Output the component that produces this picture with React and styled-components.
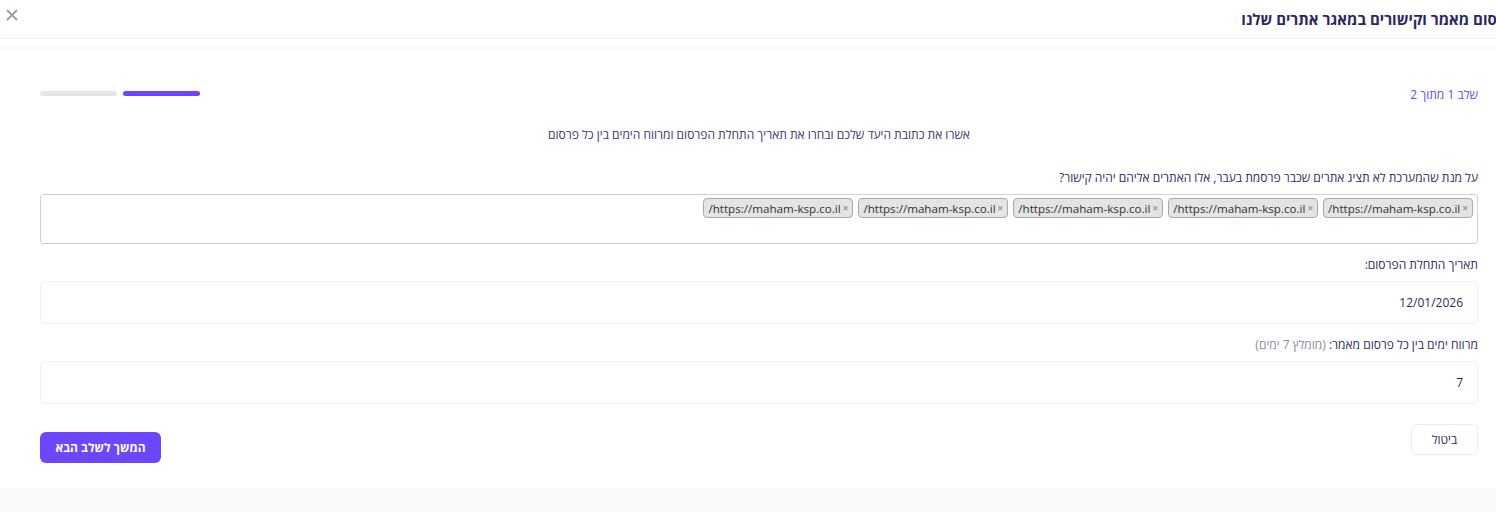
import React from 'react';
import styled, { createGlobalStyle } from 'styled-components';

const GlobalStyle = createGlobalStyle`
  html, body {
    margin: 0;
    padding: 0;
    background: #fafafb;
    overflow: hidden;
  }
  body {
    font-family: "Open Sans", "Noto Sans", "DejaVu Sans", sans-serif;
  }
`;

const Modal = styled.div`
  direction: rtl;
  width: 1496px;
  background: #fff;
  box-sizing: border-box;
  padding-bottom: 26px;
  overflow: hidden;
  box-shadow: 0 2px 6px rgba(40, 40, 80, 0.03);
`;

const Header = styled.div`
  display: flex;
  align-items: center;
  justify-content: space-between;
  height: 38px;
  padding: 0 0 0 6px;
  border-bottom: 1px solid #efeff5;
  overflow: hidden;
`;

const Title = styled.h2`
  margin: 0 -18px 0 0;
  font-size: 15px;
  font-weight: 700;
  color: #2b2862;
  white-space: nowrap;
`;

const CloseButton = styled.button`
  border: 0;
  background: none;
  padding: 0;
  width: 12px;
  height: 12px;
  margin-top: -8px;
  cursor: pointer;
  display: flex;
`;

const Divider = styled.div`
  height: 11px;
  background: linear-gradient(to bottom, #fff 0, #fff 7px, #fafafc 8px, #fafafc 11px);
`;

const Body = styled.div`
  padding: 36px 18px 0 40px;
`;

const StepRow = styled.div`
  display: flex;
  align-items: center;
  justify-content: space-between;
  height: 16px;
`;

const StepText = styled.span`
  font-size: 12px;
  color: #6c47ff;
  margin-top: 1px;
`;

const Bars = styled.div`
  display: flex;
  gap: 6px;
  margin-top: -1px;
`;

const Bar = styled.span`
  width: 77px;
  height: 5px;
  border-radius: 3px;
  background: ${p => (p.$active ? '#6c47ff' : '#e6e6ea')};
`;

const Description = styled.p`
  margin: 25px 0 27px;
  text-align: center;
  font-size: 12px;
  line-height: 16px;
  color: #3a3670;
`;

const Field = styled.div`
  margin-bottom: 13px;
`;

const Label = styled.label`
  display: block;
  font-size: 12px;
  line-height: 16px;
  color: #2e2b63;
  margin-bottom: 8px;
`;

const Hint = styled.span`
  color: #8d8b9e;
`;

const TagBox = styled.div`
  display: flex;
  flex-wrap: wrap;
  align-content: flex-start;
  gap: 5px;
  height: 50px;
  box-sizing: border-box;
  padding: 3px 4px;
  border: 1px solid #cdd1da;
  border-radius: 3px;
`;

const Tag = styled.span`
  display: inline-flex;
  align-items: center;
  gap: 2px;
  height: 20px;
  box-sizing: border-box;
  padding: 0 4px;
  background: #e4e4e4;
  border: 1px solid #aaa;
  border-radius: 4px;
  font-size: 11.6px;
  color: #333;
  white-space: nowrap;
`;

const TagRemove = styled.span`
  color: #999;
  font-size: 10px;
  font-weight: 700;
`;

const Input = styled.div`
  display: flex;
  align-items: center;
  height: 43px;
  box-sizing: border-box;
  padding: 0 14px;
  border: 1px solid #eeeef4;
  border-radius: 6px;
  font-size: 12px;
  color: #2e2b63;
`;

const Footer = styled.div`
  display: flex;
  align-items: flex-start;
  justify-content: space-between;
  margin-top: 20px;
`;

const CancelButton = styled.button`
  font-family: inherit;
  height: 31px;
  width: 67px;
  border: 1px solid #ececf2;
  border-radius: 6px;
  background: #fff;
  font-size: 12px;
  color: #2e2b63;
`;

const PrimaryButton = styled.button`
  font-family: inherit;
  margin-top: 8px;
  height: 31px;
  width: 121px;
  border: 0;
  border-radius: 6px;
  background: #6c47ff;
  color: #fff;
  font-size: 12px;
  font-weight: 700;
`;

const urls = Array.from({ length: 5 }, () => 'https://maham-ksp.co.il/');

export default function App() {
  return (
    <>
      <GlobalStyle />
      <Modal>
        <Header>
          <Title>פרסום מאמר וקישורים במאגר אתרים שלנו</Title>
          <CloseButton aria-label="סגור">
            <svg width="12" height="12" viewBox="0 0 12 12">
              <path d="M1.5 1.5l9 9M10.5 1.5l-9 9" stroke="#9c9aae" strokeWidth="1.8" strokeLinecap="round" />
            </svg>
          </CloseButton>
        </Header>
        <Divider />
        <Body>
          <StepRow>
            <StepText>שלב 1 מתוך 2</StepText>
            <Bars>
              <Bar $active />
              <Bar />
            </Bars>
          </StepRow>
          <Description>
            אשרו את כתובת היעד שלכם ובחרו את תאריך התחלת הפרסום ומרווח הימים בין כל פרסום
          </Description>
          <Field>
            <Label>על מנת שהמערכת לא תציג אתרים שכבר פרסמת בעבר, אלו האתרים אליהם יהיה קישור?</Label>
            <TagBox>
              {urls.map((u, i) => (
                <Tag key={i}>
                  <TagRemove>×</TagRemove>
                  <span>{u}</span>
                </Tag>
              ))}
            </TagBox>
          </Field>
          <Field>
            <Label>תאריך התחלת הפרסום:</Label>
            <Input>12/01/2026</Input>
          </Field>
          <Field>
            <Label>
              מרווח ימים בין כל פרסום מאמר: <Hint>(מומלץ 7 ימים)</Hint>
            </Label>
            <Input>7</Input>
          </Field>
          <Footer>
            <CancelButton>ביטול</CancelButton>
            <PrimaryButton>המשך לשלב הבא</PrimaryButton>
          </Footer>
        </Body>
      </Modal>
    </>
  );
}
